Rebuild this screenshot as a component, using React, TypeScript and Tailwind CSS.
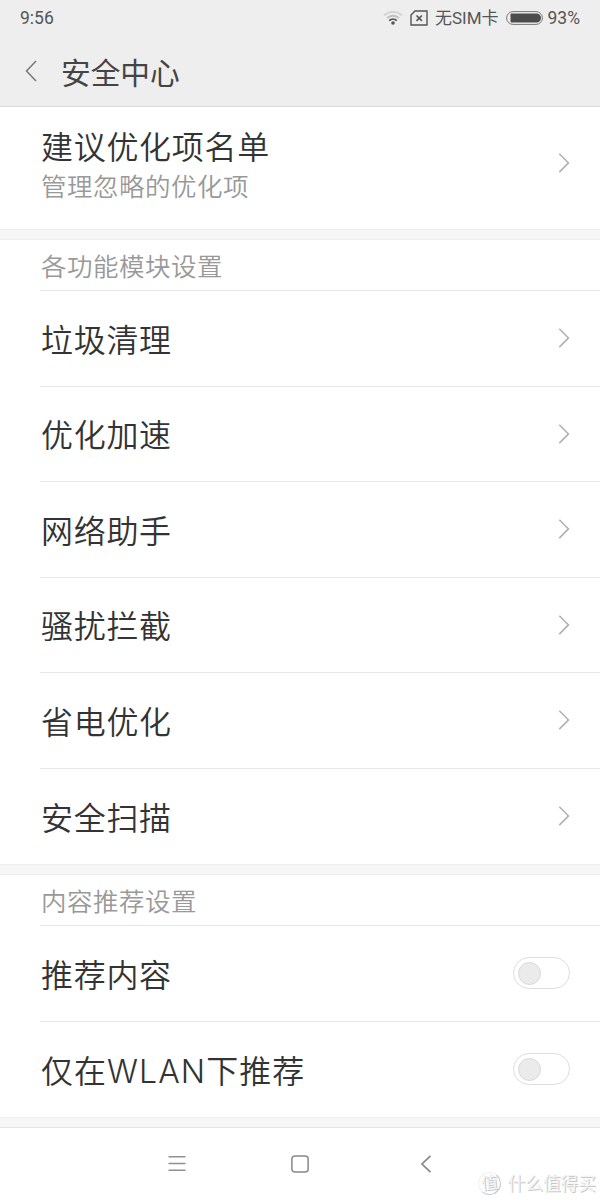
import React from 'react';

const modules = ['垃圾清理', '优化加速', '网络助手', '骚扰拦截', '省电优化', '安全扫描'];
const recommendations = ['推荐内容', '仅在WLAN下推荐'];

const ChevronRight = () => (
  <svg className="w-3 h-5 shrink-0" viewBox="0 0 12 20" fill="none" stroke="#b0b0b0" strokeWidth="1.5">
    <path d="M1.3 0.7L10.5 9.9L1.3 19.1" />
  </svg>
);

const Toggle = () => (
  <button
    role="switch"
    aria-checked="false"
    className="flex items-center w-[57px] h-8 shrink-0 rounded-full border border-[#dedede] bg-white pl-[3.5px]"
  >
    <span className="w-[23px] h-[23px] rounded-full bg-[#ebebeb] border border-[#d8d8d8]" />
  </button>
);

const Divider = () => <div className="h-[11px] border-y border-[#ededed] bg-[#f6f6f6]" />;

const SectionTitle: React.FC<{ title: string }> = ({ title }) => (
  <div className="ml-10 h-[51px] border-b border-[#e8e8e8] flex items-center">
    <h2 className="text-[25.5px] leading-none tracking-[0.5px] text-[#999] pl-px pt-[3px]">{title}</h2>
  </div>
);

interface RowProps {
  label: string;
  last: boolean;
  children: React.ReactNode;
}

const Row: React.FC<RowProps> = ({ label, last, children }) => {
  const tracking = /[A-Z]/.test(label) ? 'tracking-[1.05px]' : 'tracking-[0.7px]';

  return (
    <div className={`ml-10 h-[95.5px] pr-[30px] flex items-center justify-between ${last ? '' : 'border-b border-[#e8e8e8]'}`}>
      <span className={`text-[32px] leading-none text-[#333] pl-px pt-[5px] ${tracking}`}>{label}</span>
      {children}
    </div>
  );
};

const StatusBar = () => (
  <div className="h-9 px-5 flex items-center justify-between text-[17.5px] leading-none font-normal text-[#555] font-[Roboto,'Noto_Sans_CJK_SC',sans-serif]">
    <span className="pt-[2px]">9:56</span>
    <div className="flex items-center">
      {/* Wifi */}
      <svg className="w-5 h-4 mr-[7px]" viewBox="0 0 20 16" fill="none" strokeWidth="1.8">
        <path d="M1 5.4C6 0.6 14 0.6 19 5.4" stroke="#d2d2d2" />
        <path d="M4 8.2C7.4 4.9 12.6 4.9 16 8.2" stroke="#bdbdbd" />
        <path d="M6.2 10.6C8.4 8.5 11.6 8.5 13.8 10.6" stroke="#555" />
        <circle cx="10" cy="13" r="1.8" fill="#555" />
      </svg>
      {/* Missing SIM */}
      <svg className="w-[18px] h-4 mr-[7px]" viewBox="0 0 18 16" fill="none" stroke="#555" strokeWidth="1.4">
        <path d="M5 1H17V15H1V5Z" />
        <path d="M6.5 5.5L11.9 10.9M11.9 5.5L6.5 10.9" strokeWidth="1.6" />
      </svg>
      <span className="mr-[7px] text-[17px]">无SIM卡</span>
      {/* Battery */}
      <svg className="w-[37px] h-[14px] mr-[5px]" viewBox="0 0 37 14" fill="none">
        <rect x="0.6" y="0.6" width="35.8" height="12.8" rx="6.4" stroke="#777" strokeWidth="1" />
        <path d="M5.5 2.5H30.5A4.5 4.5 0 0 1 30.5 11.5H5.5Q4.5 11.5 4.5 10.5V3.5Q4.5 2.5 5.5 2.5Z" fill="#4c4c4c" />
      </svg>
      <span className="pt-[2px]">93%</span>
    </div>
  </div>
);

const NavBar = () => (
  <nav className="relative h-[73px] border-t border-[#e4e4e4] bg-white">
    <div className="h-full flex items-center pl-[168px]">
      <svg className="w-[18px] h-[18px]" viewBox="0 0 18 18" stroke="#909090" strokeWidth="1.4">
        <path d="M0.5 1.7H17.5M0.5 8.5H17.5M0.5 15.3H17.5" />
      </svg>
      <svg className="w-[18px] h-[18px] ml-[105px]" viewBox="0 0 18 18" fill="none" stroke="#888" strokeWidth="1.5">
        <rect x="0.9" y="0.9" width="16.2" height="16.2" rx="3" />
      </svg>
      <svg className="w-3 h-[18px] ml-[111px]" viewBox="0 0 12 18" fill="none" stroke="#888" strokeWidth="1.7">
        <path d="M10.5 0.8L2 9L10.5 17.2" />
      </svg>
    </div>
    {/* Watermark */}
    <div className="absolute right-[4px] bottom-[5px] flex items-center font-normal text-[#f4f4f4] [text-shadow:1px_1px_0_#c8c8c8]">
      <span className="w-[23px] h-[23px] mr-[7px] rounded-full border border-[#f0f0f0] border-r-[#c8c8c8] border-b-[#c8c8c8] flex items-center justify-center text-[17px] leading-none -rotate-6">
        值
      </span>
      <span className="text-[17.7px] leading-none">什么值得买</span>
    </div>
  </nav>
);

export default function App() {
  return (
    <div className="w-[600px] h-[1200px] overflow-hidden bg-white font-[350] font-[Inter,'Noto_Sans_CJK_SC',sans-serif]">
      <header className="h-[107px] bg-[#eee] border-b border-[#dadada]">
        <StatusBar />
        <div className="h-[70px] pl-[25px] flex items-center">
          <svg className="w-3 h-[22px] mr-6" viewBox="0 0 12 22" fill="none" stroke="#777" strokeWidth="1.5">
            <path d="M11 1L1.5 11L11 21" />
          </svg>
          <h1 className="text-[29.7px] leading-none font-normal text-[#444] pt-[5px]">安全中心</h1>
        </div>
      </header>

      <div className="h-[122px] pl-[41px] pr-[30px] flex justify-between">
        <div className="pt-[25px]">
          <p className="text-[32px] leading-none tracking-[0.7px] text-[#333]">建议优化项名单</p>
          <p className="text-[25.5px] leading-none tracking-[0.5px] text-[#999] mt-[10px]">管理忽略的优化项</p>
        </div>
        <div className="pt-[46px]">
          <ChevronRight />
        </div>
      </div>

      <Divider />
      <SectionTitle title="各功能模块设置" />
      {modules.map((label, i) => (
        <Row key={label} label={label} last={i === modules.length - 1}>
          <ChevronRight />
        </Row>
      ))}

      <Divider />
      <SectionTitle title="内容推荐设置" />
      {recommendations.map((label, i) => (
        <Row key={label} label={label} last={i === recommendations.length - 1}>
          <Toggle />
        </Row>
      ))}

      <div className="h-[10px] border-t border-[#f1f1f1] bg-[#f6f6f6]" />
      <NavBar />
    </div>
  );
}
